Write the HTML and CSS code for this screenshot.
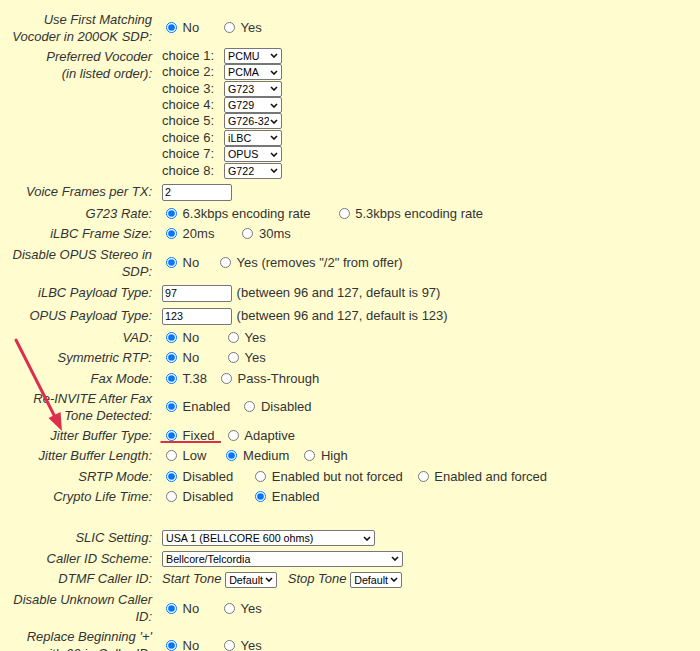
FILE: index.html
```html
<!DOCTYPE html>
<html lang="en">

<head>
    <meta charset="UTF-8">
    <meta name="viewport" content="width=device-width, initial-scale=1.0">
    <title>FXS Port Settings</title>
    <link rel="stylesheet" href="styles.css">
</head>

<body>
    <table class="form">
        <tr>
            <td class="lbl">Use First Matching<br>Vocoder in 200OK SDP:</td>
            <td>
                <div class="choices">
                    <label class="opt"><input type="radio" name="firstvoc" checked> No</label>
                    <label class="opt gap-21"><input type="radio" name="firstvoc"> Yes</label>
                </div>
            </td>
        </tr>
        <tr>
            <td class="lbl top">Preferred Vocoder<br>(in listed order):</td>
            <td>
                <!-- Vocoder priority list -->
                <div class="vocoders">
                    <span>choice 1:</span>
                    <select class="codec"><option>PCMU</option><option>PCMA</option><option>G723</option><option>G729</option><option>G726-32</option><option>iLBC</option><option>OPUS</option><option>G722</option></select>
                    <span>choice 2:</span>
                    <select class="codec"><option>PCMA</option><option>PCMU</option></select>
                    <span>choice 3:</span>
                    <select class="codec"><option>G723</option><option>PCMU</option></select>
                    <span>choice 4:</span>
                    <select class="codec"><option>G729</option><option>PCMU</option></select>
                    <span>choice 5:</span>
                    <select class="codec"><option>G726-32</option><option>PCMU</option></select>
                    <span>choice 6:</span>
                    <select class="codec"><option>iLBC</option><option>PCMU</option></select>
                    <span>choice 7:</span>
                    <select class="codec"><option>OPUS</option><option>PCMU</option></select>
                    <span>choice 8:</span>
                    <select class="codec"><option>G722</option><option>PCMU</option></select>
                </div>
            </td>
        </tr>
        <tr class="field">
            <td class="lbl">Voice Frames per TX:</td>
            <td><input class="num" type="text" value="2"></td>
        </tr>
        <tr>
            <td class="lbl">G723 Rate:</td>
            <td>
                <div class="choices">
                    <label class="opt"><input type="radio" name="g723" checked> 6.3kbps encoding rate</label>
                    <label class="opt gap-24"><input type="radio" name="g723"> 5.3kbps encoding rate</label>
                </div>
            </td>
        </tr>
        <tr>
            <td class="lbl">iLBC Frame Size:</td>
            <td>
                <div class="choices">
                    <label class="opt"><input type="radio" name="ilbcsize" checked> 20ms</label>
                    <label class="opt gap-24"><input type="radio" name="ilbcsize"> 30ms</label>
                </div>
            </td>
        </tr>
        <tr>
            <td class="lbl">Disable OPUS Stereo in<br>SDP:</td>
            <td>
                <div class="choices">
                    <label class="opt"><input type="radio" name="opusstereo" checked> No</label>
                    <label class="opt gap-17"><input type="radio" name="opusstereo"> Yes (removes "/2" from offer)</label>
                </div>
            </td>
        </tr>
        <tr class="field">
            <td class="lbl">iLBC Payload Type:</td>
            <td><input class="num" type="text" value="97"> (between 96 and 127, default is 97)</td>
        </tr>
        <tr class="field">
            <td class="lbl">OPUS Payload Type:</td>
            <td><input class="num" type="text" value="123"> (between 96 and 127, default is 123)</td>
        </tr>
        <tr>
            <td class="lbl">VAD:</td>
            <td>
                <div class="choices">
                    <label class="opt"><input type="radio" name="vad" checked> No</label>
                    <label class="opt gap-25"><input type="radio" name="vad"> Yes</label>
                </div>
            </td>
        </tr>
        <tr>
            <td class="lbl">Symmetric RTP:</td>
            <td>
                <div class="choices">
                    <label class="opt"><input type="radio" name="symrtp" checked> No</label>
                    <label class="opt gap-25"><input type="radio" name="symrtp"> Yes</label>
                </div>
            </td>
        </tr>
        <tr>
            <td class="lbl">Fax Mode:</td>
            <td>
                <div class="choices">
                    <label class="opt"><input type="radio" name="fax" checked> T.38</label>
                    <label class="opt gap-10"><input type="radio" name="fax"> Pass-Through</label>
                </div>
            </td>
        </tr>
        <tr>
            <td class="lbl">Re-INVITE After Fax<br>Tone Detected:</td>
            <td>
                <div class="choices">
                    <label class="opt"><input type="radio" name="reinvite" checked> Enabled</label>
                    <label class="opt gap-10"><input type="radio" name="reinvite"> Disabled</label>
                </div>
            </td>
        </tr>
        <tr>
            <td class="lbl">Jitter Buffer Type:</td>
            <td>
                <div class="choices">
                    <label class="opt"><input type="radio" name="jbtype" checked> Fixed</label>
                    <label class="opt gap-10"><input type="radio" name="jbtype"> Adaptive</label>
                </div>
            </td>
        </tr>
        <tr>
            <td class="lbl">Jitter Buffer Length:</td>
            <td>
                <div class="choices">
                    <label class="opt"><input type="radio" name="jblen"> Low</label>
                    <label class="opt gap-16"><input type="radio" name="jblen" checked> Medium</label>
                    <label class="opt gap-11"><input type="radio" name="jblen"> High</label>
                </div>
            </td>
        </tr>
        <tr>
            <td class="lbl">SRTP Mode:</td>
            <td>
                <div class="choices">
                    <label class="opt"><input type="radio" name="srtp" checked> Disabled</label>
                    <label class="opt gap-18"><input type="radio" name="srtp"> Enabled but not forced</label>
                    <label class="opt gap-11"><input type="radio" name="srtp"> Enabled and forced</label>
                </div>
            </td>
        </tr>
        <tr>
            <td class="lbl">Crypto Life Time:</td>
            <td>
                <div class="choices">
                    <label class="opt"><input type="radio" name="crypto"> Disabled</label>
                    <label class="opt gap-18"><input type="radio" name="crypto" checked> Enabled</label>
                </div>
            </td>
        </tr>
        <tr>
            <td class="lbl">&nbsp;</td>
            <td>&nbsp;</td>
        </tr>
        <tr>
            <td class="lbl">SLIC Setting:</td>
            <td>
                <select class="slic">
                    <option>USA 1 (BELLCORE 600 ohms)</option>
                    <option>USA 2 (BELLCORE 900 ohms)</option>
                </select>
            </td>
        </tr>
        <tr>
            <td class="lbl">Caller ID Scheme:</td>
            <td>
                <select class="scheme">
                    <option>Bellcore/Telcordia</option>
                    <option>ETSI-FSK</option>
                    <option>DTMF</option>
                </select>
            </td>
        </tr>
        <tr>
            <td class="lbl">DTMF Caller ID:</td>
            <td>
                <span class="tone-lbl">Start Tone</span>
                <select class="tone"><option>Default</option><option>A</option><option>B</option></select>
                <span class="tone-lbl stop">Stop Tone</span>
                <select class="tone"><option>Default</option><option>C</option><option>D</option></select>
            </td>
        </tr>
        <tr>
            <td class="lbl">Disable Unknown Caller<br>ID:</td>
            <td>
                <div class="choices">
                    <label class="opt"><input type="radio" name="unknowncid" checked> No</label>
                    <label class="opt gap-21"><input type="radio" name="unknowncid"> Yes</label>
                </div>
            </td>
        </tr>
        <tr>
            <td class="lbl">Replace Beginning '+'<br>with 00 in Caller ID:</td>
            <td>
                <div class="choices">
                    <label class="opt"><input type="radio" name="plus00" checked> No</label>
                    <label class="opt gap-21"><input type="radio" name="plus00"> Yes</label>
                </div>
            </td>
        </tr>
    </table>

    <!-- red markup drawn over the form -->
    <svg class="marks" width="700" height="651" viewBox="0 0 700 651">
        <line x1="16" y1="340" x2="55.5" y2="418" stroke="#dc2f4c" stroke-width="3" stroke-linecap="round" />
        <polygon points="62,431 48.5,418 60.5,412" fill="#dc2f4c" />
        <line x1="160.5" y1="442" x2="221" y2="442" stroke="#dc2f4c" stroke-width="2" />
    </svg>
</body>

</html>
```

FILE: styles.css
```css
/* Page and form table */
body {
    margin: 0;
    padding-top: 9px;
    background-color: #fffdd0;
    font-family: "Liberation Sans", Arial, sans-serif;
    font-size: 13px;
    color: #333;
    position: relative;
}

.form {
    border-collapse: collapse;
}

.form td {
    padding: 1.65px 0;
    line-height: 17px;
    vertical-align: middle;
    white-space: nowrap;
}

.form td.lbl {
    width: 144px;
    padding-left: 8px;
    padding-right: 10px;
    text-align: right;
    font-style: italic;
}

.form td.lbl.top {
    vertical-align: top;
}

.form tr.field td {
    padding-top: 2.5px;
    padding-bottom: 2.5px;
}

/* Radio button groups */
.choices {
    display: flex;
    align-items: center;
}

.opt input[type="radio"] {
    width: 11px;
    height: 11px;
    margin: 0 2px 0 4px;
    vertical-align: -1px;
}

.gap-10 { margin-left: 10px; }
.gap-11 { margin-left: 11px; }
.gap-16 { margin-left: 16px; }
.gap-17 { margin-left: 17px; }
.gap-18 { margin-left: 18px; }
.gap-21 { margin-left: 21px; }
.gap-24 { margin-left: 24px; }
.gap-25 { margin-left: 25px; }

/* Text boxes and drop-downs */
.num {
    width: 70px;
    height: 17px;
    box-sizing: border-box;
    margin: 0 1px 0 0;
    padding: 0 2px;
    border: 1px solid #767676;
    border-radius: 2px;
    background: #fff;
    color: #000;
    font: 10.7px "Liberation Sans", Arial, sans-serif;
    vertical-align: middle;
}

select {
    appearance: none;
    -webkit-appearance: none;
    height: 16px;
    box-sizing: border-box;
    margin: 0;
    padding: 0 12px 0 3px;
    border: 1px solid #767676;
    border-radius: 2px;
    background: #fff url("data:image/svg+xml,%3Csvg xmlns='http://www.w3.org/2000/svg' width='8' height='5' viewBox='0 0 8 5'%3E%3Cpath d='M1 1l3 3 3-3' fill='none' stroke='%23111' stroke-width='1.6'/%3E%3C/svg%3E") no-repeat right 3px center;
    color: #000;
    font: 10.7px "Liberation Sans", Arial, sans-serif;
    line-height: 14px;
    vertical-align: middle;
}

.vocoders {
    display: grid;
    grid-template-columns: auto auto;
    justify-content: start;
    align-items: center;
    column-gap: 10px;
    row-gap: 0.4px;
    line-height: 16px;
}

.codec {
    width: 58px;
}

.slic {
    width: 213px;
}

.scheme {
    width: 241px;
}

.tone {
    width: 52px;
}

.tone-lbl {
    font-style: italic;
}

.tone-lbl.stop {
    margin-left: 7px;
}

/* Annotation layer */
.marks {
    position: absolute;
    top: 0;
    left: 0;
    pointer-events: none;
}
```
